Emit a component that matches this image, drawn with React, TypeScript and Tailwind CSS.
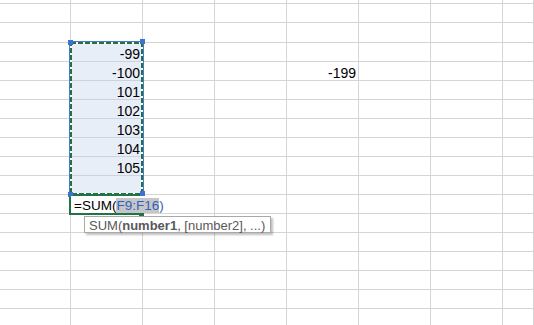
import React from 'react';

type Row = { n: number; h: 'h-[4px]' | 'h-[19px]' | 'h-[20px]' | 'h-[17px]' };

const rows: Row[] = [
  { n: 6, h: 'h-[4px]' },
  { n: 7, h: 'h-[19px]' },
  { n: 8, h: 'h-[20px]' },
  ...Array.from({ length: 14 }, (_, i): Row => ({ n: 9 + i, h: 'h-[19px]' })),
  { n: 23, h: 'h-[17px]' },
];

const cols = ['E', 'F', 'G', 'H', 'I', 'J', 'K', 'L'];

const colWidth: Record<string, string> = {
  E: 'w-[71px] shrink-0',
  L: 'flex-1',
};

const values: Record<string, string> = {
  F9: '-99',
  F10: '-100',
  F11: '101',
  F12: '102',
  F13: '103',
  F14: '104',
  F15: '105',
  I10: '-199',
};

const isSelected = (col: string, n: number) => col === 'F' && n >= 9 && n <= 16;

const Cell = ({ col, n }: { col: string; n: number }) => {
  const key = `${col}${n}`;
  const value = values[key];
  const selected = isSelected(col, n);
  return (
    <div
      className={`${colWidth[col] ?? 'w-[72px] shrink-0'} border-r border-b ${
        selected ? 'bg-[#e8eef7] border-[#cdd3dd]' : 'border-[#d4d4d4]'
      } ${value ? 'pt-[4px] pr-[2px] text-right text-[14px] leading-[14px] text-black' : ''}`}
    >
      {value}
    </div>
  );
};

// blue corner handles of the selected range
const Handle = ({ pos }: { pos: string }) => (
  <div className={`absolute ${pos} w-[5px] h-[5px] bg-[#3b73d3] z-30`} />
);

export default function App() {
  return (
    <div className="relative w-[534px] h-[325px] overflow-hidden bg-white font-['Liberation_Sans',Arial,sans-serif]">
      <div className="flex flex-col">
        {rows.map((row) => (
          <div key={row.n} className={`flex ${row.h}`}>
            {cols.map((col) => (
              <Cell key={col} col={col} n={row.n} />
            ))}
          </div>
        ))}
      </div>

      {/* copy marquee around F9:F16 */}
      <svg className="absolute left-[69px] top-[41px] z-20" width="75" height="155" viewBox="0 0 75 155">
        <rect x="0.5" y="0.5" width="74" height="154" fill="none" stroke="#4a7bd0" strokeWidth="1" />
        <rect x="2" y="2" width="71" height="151" fill="none" stroke="#ffffff" strokeWidth="2" />
        <rect x="2" y="2" width="71" height="151" fill="none" stroke="#217346" strokeWidth="2" strokeDasharray="5 2" />
      </svg>
      <Handle pos="left-[68px] top-[40px]" />
      <Handle pos="left-[140px] top-[39px]" />
      <Handle pos="left-[68px] top-[192px]" />
      <Handle pos="left-[140px] top-[191px]" />

      {/* active cell F17 with in-cell editor */}
      <div className="absolute left-[69px] top-[194px] w-[75px] h-[21px] border-2 border-[#217346] z-20" />
      <div className="absolute left-[139px] top-[212px] w-[5px] h-[4px] bg-[#217346] z-20" />
      <div className="absolute left-[71px] top-[196px] w-[94px] h-[17px] bg-white pl-[3px] pt-[3px] z-40 whitespace-nowrap text-[13.5px] leading-[14px]">
        <span className="text-black">=SUM(</span>
        <span className="bg-[#c6c6c6] text-[#2f62c0]">F9:F16</span>
        <span className="text-[#2f62c0]">)</span>
      </div>

      {/* function argument hint */}
      <div className="absolute left-[84px] top-[216px] w-[187px] h-[17px] border border-[#a9a9a9] bg-white pl-[4px] pt-[2px] z-40 shadow-[2px_2px_2px_rgba(0,0,0,0.25)] whitespace-nowrap text-[13px] leading-[13px] text-[#595959]">
        SUM(<b>number1</b>, [number2], ...)
      </div>
    </div>
  );
}
